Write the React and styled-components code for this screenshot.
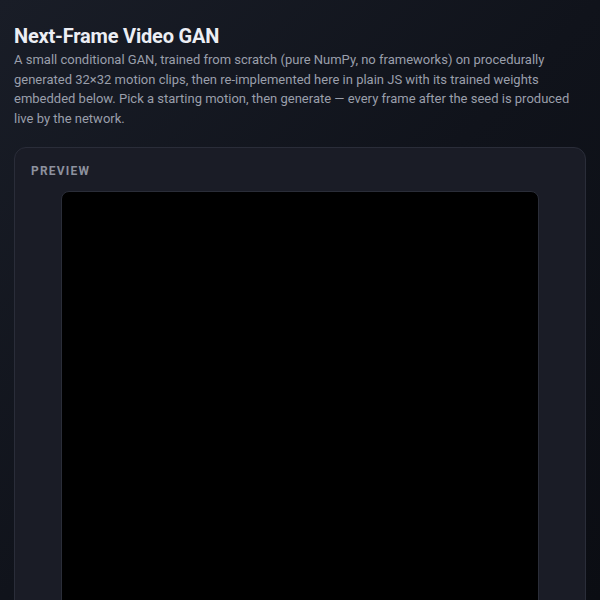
import React from 'react';
import styled, { createGlobalStyle } from 'styled-components';

const GlobalStyle = createGlobalStyle`
  html, body {
    margin: 0;
    padding: 0;
    height: 100%;
  }
  body {
    background: linear-gradient(135deg, #191d27 0%, #10131b 50%, #0b0d13 100%);
    font-family: Roboto, "Noto Sans", "Liberation Sans", sans-serif;
    color: #e6e8ee;
    overflow: hidden;
  }
`;

const Page = styled.main`
  padding: 24px 14px;
  box-sizing: border-box;
  min-height: 100vh;
`;

const Title = styled.h1`
  margin: 0 0 2px;
  font-size: 20px;
  line-height: 24px;
  font-weight: 700;
  letter-spacing: -0.2px;
  color: #eceef4;
`;

const Intro = styled.p`
  margin: 0 0 19px;
  font-size: 13px;
  line-height: 1.5;
  color: #9a9fab;
`;

const Card = styled.section`
  background: #1a1c26;
  border: 1px solid #2a2d39;
  border-radius: 12px;
  padding: 16px;
`;

const Label = styled.div`
  font-size: 12px;
  line-height: 15px;
  font-weight: 700;
  letter-spacing: 1.2px;
  text-transform: uppercase;
  color: #8d919e;
  margin-bottom: 12px;
`;

const Screen = styled.canvas`
  display: block;
  margin: 0 auto;
  width: 478px;
  height: 478px;
  background: #000;
  border: 1px solid #2a2d38;
  border-radius: 8px;
  box-sizing: border-box;
`;

const App = () => (
  <>
    <GlobalStyle />
    <Page>
      <Title>Next-Frame Video GAN</Title>
      <Intro>
        A small conditional GAN, trained from scratch (pure NumPy, no frameworks) on procedurally
        generated 32×32 motion clips, then re-implemented here in plain JS with its trained weights
        embedded below. Pick a starting motion, then generate — every frame after the seed is
        produced live by the network.
      </Intro>
      <Card>
        <Label>Preview</Label>
        <Screen width={32} height={32} />
      </Card>
    </Page>
  </>
);

export default App;
